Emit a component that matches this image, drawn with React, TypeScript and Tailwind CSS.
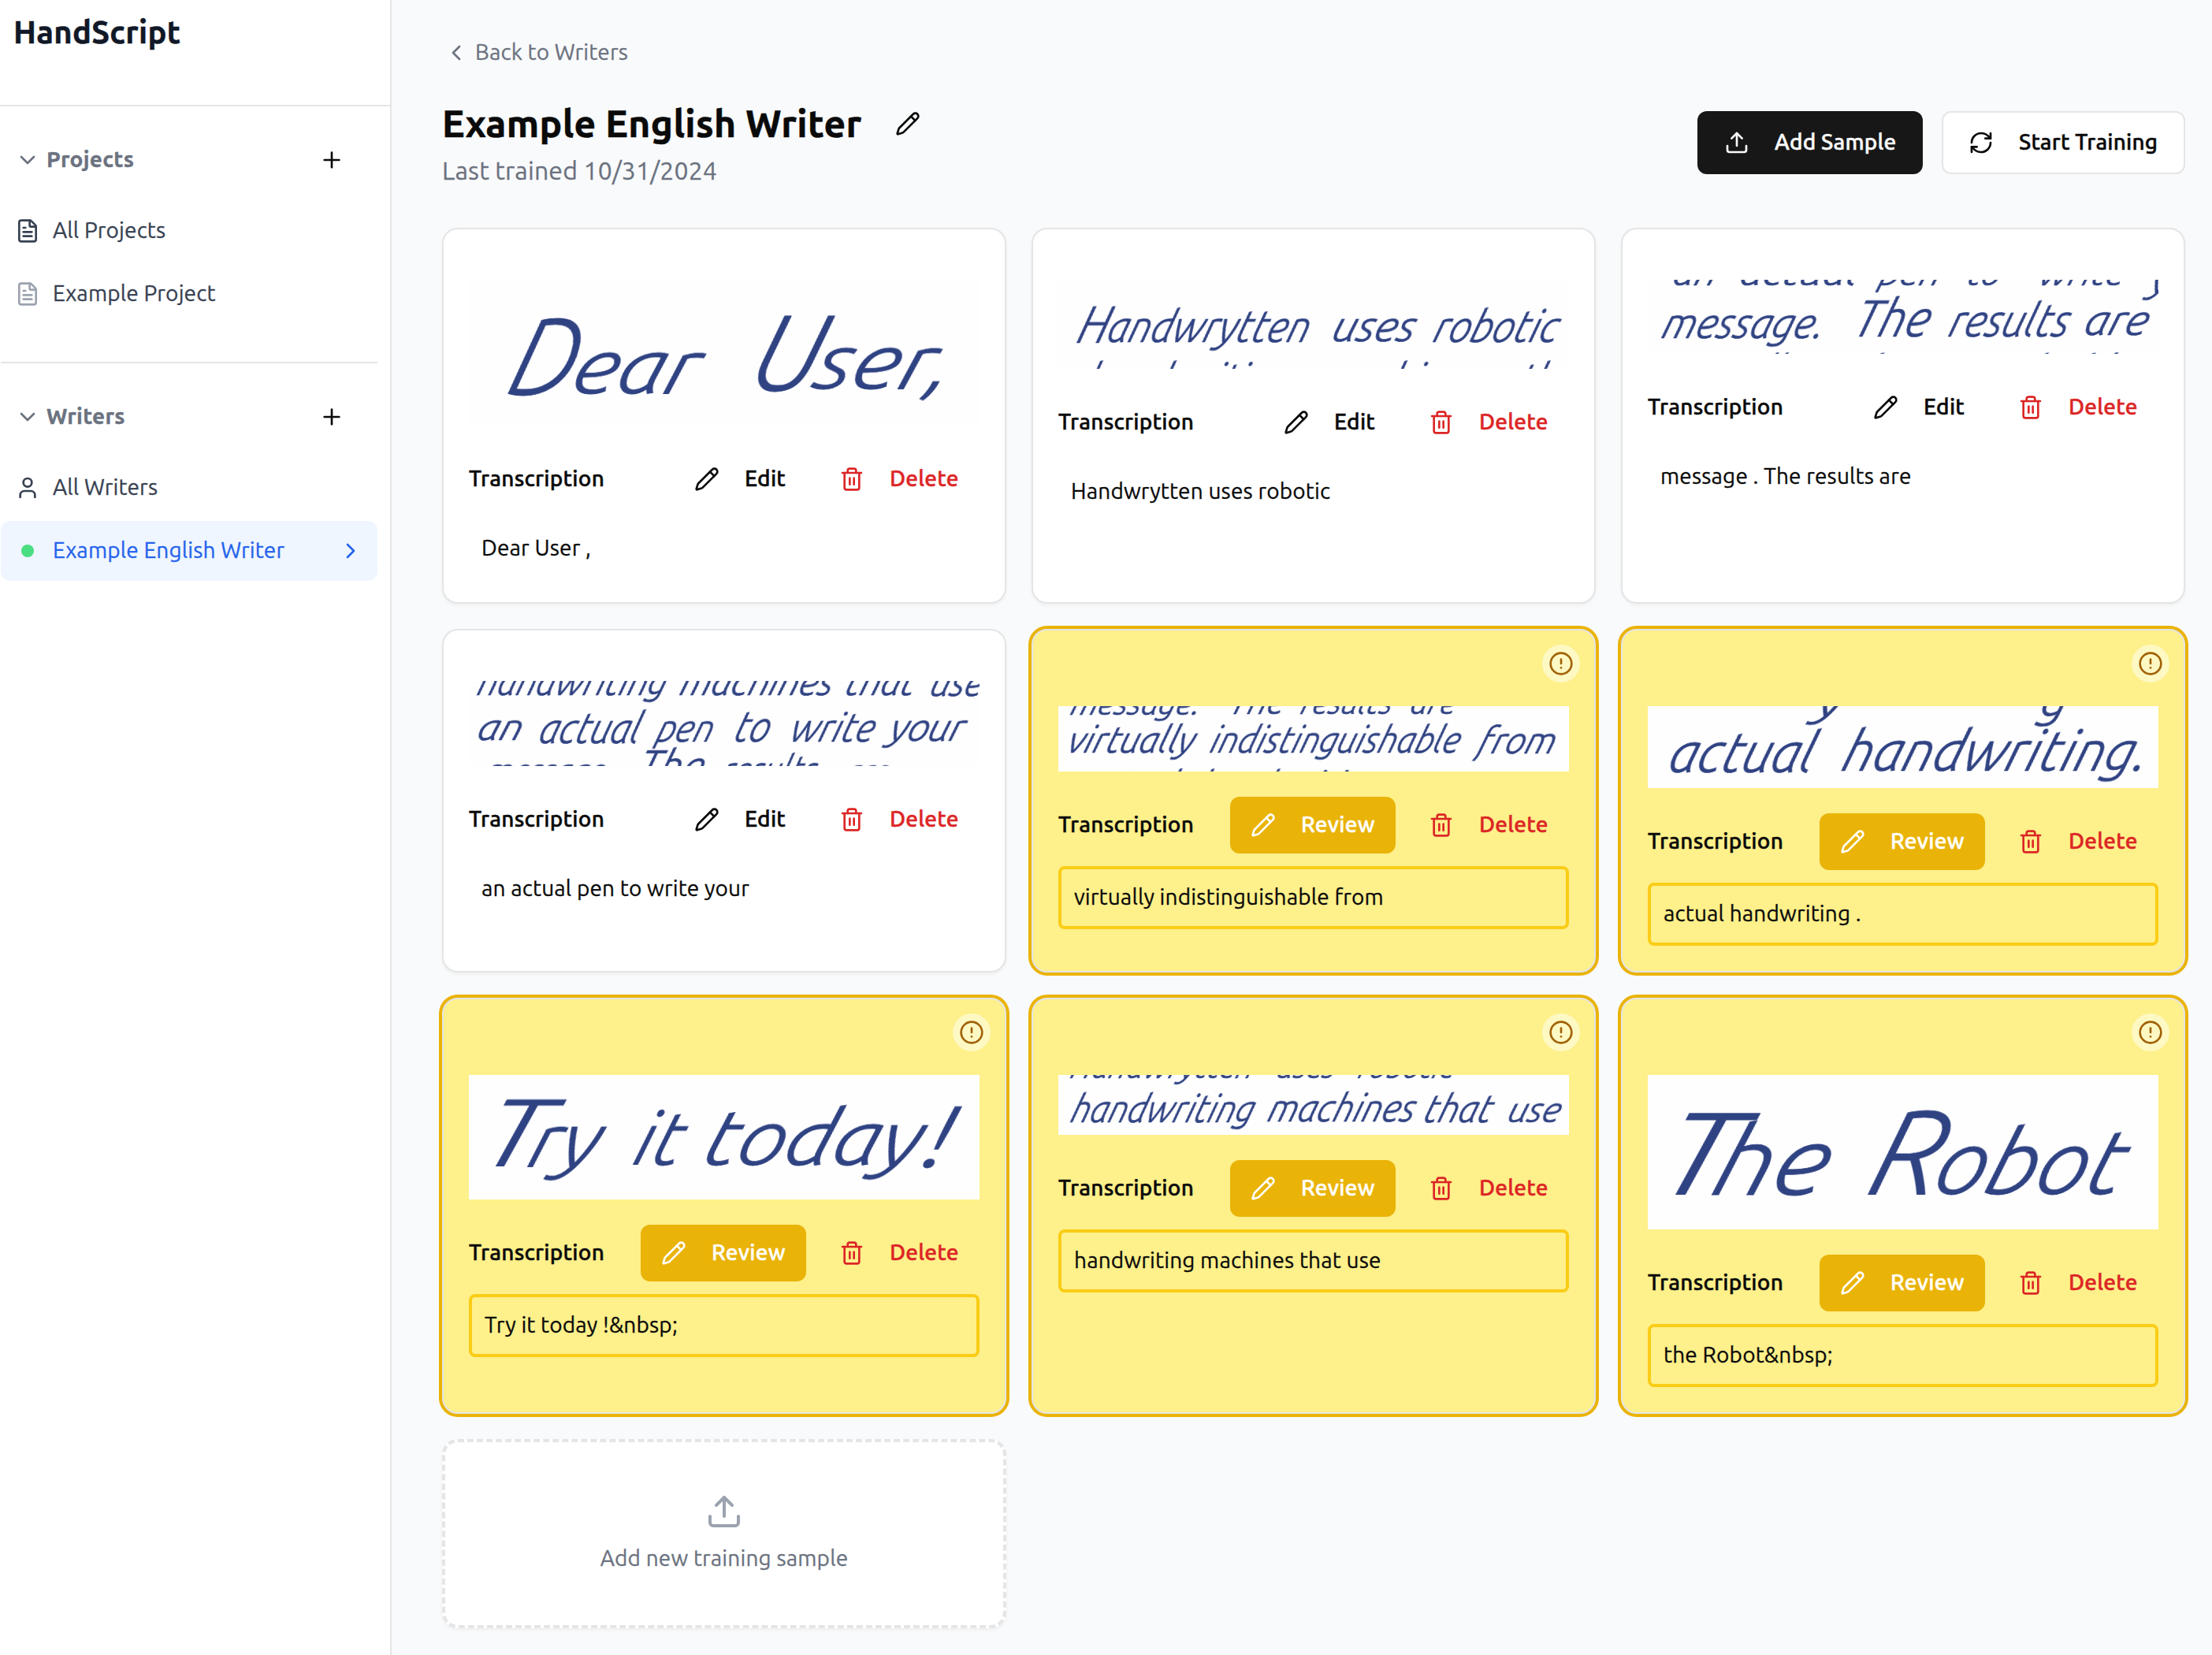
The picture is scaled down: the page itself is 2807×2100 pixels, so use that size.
import React from "react";
import {
  ChevronDown,
  ChevronLeft,
  ChevronRight,
  CircleAlert,
  FileText,
  Pencil,
  Plus,
  RefreshCw,
  Trash2,
  Upload,
  User,
} from "lucide-react";

// One piece of handwriting: text, x, baseline, width, font size.
type Ink = [string, number, number, number, number];

interface Sample {
  text: string;
  review: boolean;
  height: number;
  ink: Ink[];
}

const samples: Sample[] = [
  {
    text: "Dear User ,",
    review: false,
    height: 185,
    ink: [
      ["D", 46, 146, 84, 140],
      ["ear", 128, 144, 158, 98],
      ["U", 352, 140, 86, 136],
      ["ser,", 434, 138, 176, 98],
    ],
  },
  {
    text: "Handwrytten uses robotic",
    review: false,
    height: 113,
    ink: [
      ["H", 22, 80, 38, 66],
      ["andwrytten", 60, 79, 256, 56],
      ["uses", 346, 78, 104, 54],
      ["robotic", 474, 79, 158, 56],
      ["handwriting", 33, 145, 255, 54],
      ["machines", 330, 145, 200, 54],
      ["that", 582, 145, 90, 54],
    ],
  },
  {
    text: "message . The results are",
    review: false,
    height: 94,
    ink: [
      ["an", 30, 7, 56, 46],
      ["actual", 115, 7, 150, 46],
      ["pen", 292, 7, 78, 46],
      ["to", 404, 7, 42, 46],
      ["write", 495, 7, 108, 46],
      ["your", 636, 16, 100, 52],
      ["message.", 16, 74, 206, 54],
      ["The", 258, 72, 96, 66],
      ["results", 380, 72, 152, 58],
      ["are", 552, 70, 80, 54],
      ["virtually", 30, 131, 160, 50],
      ["indistinguishable", 215, 131, 400, 50],
    ],
  },
  {
    text: "an actual pen to write your",
    review: false,
    height: 108,
    ink: [
      ["handwriting", 9, 18, 240, 50],
      ["machines", 266, 18, 194, 48],
      ["that", 476, 18, 88, 48],
      ["use", 584, 19, 66, 48],
      ["an", 9, 75, 57, 48],
      ["actual", 87, 79, 128, 54],
      ["pen", 236, 77, 72, 50],
      ["to", 335, 77, 44, 54],
      ["write", 406, 77, 106, 52],
      ["your", 532, 76, 94, 50],
      ["message.", 20, 129, 160, 44],
      ["The", 210, 128, 84, 56],
      ["results", 318, 131, 120, 52],
      ["are", 474, 131, 56, 46],
    ],
  },
  {
    text: "virtually indistinguishable from",
    review: true,
    height: 83,
    ink: [
      ["message.", 14, 11, 165, 40],
      ["The", 215, 10, 70, 46],
      ["results", 306, 10, 116, 40],
      ["are", 445, 10, 58, 40],
      ["virtually", 10, 59, 160, 47],
      ["indistinguishable", 191, 59, 316, 48],
      ["from", 531, 60, 98, 48],
      ["actual", 30, 112, 120, 42],
      ["handwriting.", 178, 112, 240, 42],
    ],
  },
  {
    text: "actual handwriting .",
    review: true,
    height: 104,
    ink: [
      ["y", 212, 12, 34, 62],
      ["g", 496, 14, 34, 62],
      ["actual", 24, 84, 184, 72],
      ["handwriting.", 244, 82, 388, 72],
    ],
  },
  {
    text: "Try it today !&nbsp;",
    review: true,
    height: 158,
    ink: [
      ["T", 8, 116, 82, 122],
      ["ry", 72, 116, 88, 96],
      ["it", 206, 114, 60, 94],
      ["today", 294, 114, 274, 98],
      ["!", 574, 117, 30, 110],
    ],
  },
  {
    text: "handwriting machines that use",
    review: true,
    height: 76,
    ink: [
      ["Handwrytten", 14, 4, 232, 44],
      ["uses", 276, 4, 74, 42],
      ["robotic", 379, 4, 122, 42],
      ["handwriting", 14, 60, 232, 50],
      ["machines", 264, 59, 186, 49],
      ["that", 462, 60, 86, 50],
      ["use", 569, 60, 66, 45],
    ],
  },
  {
    text: "the Robot&nbsp;",
    review: true,
    height: 196,
    ink: [
      ["T", 4, 152, 98, 148],
      ["he", 78, 152, 144, 122],
      ["R", 276, 151, 90, 152],
      ["obot", 360, 151, 238, 114],
    ],
  },
];

function Handwriting({ ink, height }: { ink: Ink[]; height: number }) {
  return (
    <svg
      viewBox={`0 0 648 ${height}`}
      width="648"
      height={height}
      className="block overflow-hidden bg-[#fefeff]"
    >
      {ink.map(([t, x, y, w, size], i) => (
        <text
          key={i}
          transform={`translate(${x} ${y}) skewX(-14)`}
          textLength={w}
          lengthAdjust="spacingAndGlyphs"
          fontSize={size}
          strokeWidth={size > 80 ? 0.8 : 0.7}
          className="fill-[#2f4282] stroke-[#2f4282] font-['Ubuntu','Lato',sans-serif] font-light italic blur-[0.7px]"
        >
          {t}
        </text>
      ))}
    </svg>
  );
}

function Label({ children }: { children: React.ReactNode }) {
  return <span className="pb-[2px]">{children}</span>;
}

function SampleCard({ sample }: { sample: Sample }) {
  const { review } = sample;
  return (
    <div
      className={
        review
          ? "relative rounded-[20px] border-2 border-[#e5e5e5] bg-[#fef08a] px-8 pt-24 pb-8 shadow-[0_0_0_4px_#eab308]"
          : "relative rounded-[20px] border-2 border-[#e5e5e5] bg-white px-8 pt-16 pb-8 shadow-[0_2px_4px_rgba(0,0,0,0.05)]"
      }
    >
      {review && (
        <div className="absolute top-[18px] right-[18px] rounded-full bg-[#fef9c3] p-2 text-[#a16207]">
          <CircleAlert size={32} />
        </div>
      )}
      <Handwriting ink={sample.ink} height={sample.height} />
      <div className="mt-8 flex h-[72px] items-center justify-between font-medium tracking-[0.25px] [-webkit-text-stroke:0.5px]">
        <Label>Transcription</Label>
        <div className="flex gap-4">
          {review ? (
            <button className="flex h-[72px] w-[210px] items-center gap-8 rounded-[12px] bg-[#eab308] px-[26px] text-white">
              <Pencil size={32} className="shrink-0" />
              <Label>Review</Label>
            </button>
          ) : (
            <button className="flex h-[72px] w-[168px] items-center gap-8 px-[26px]">
              <Pencil size={32} className="shrink-0" />
              <Label>Edit</Label>
            </button>
          )}
          <button className="flex h-[72px] w-[204px] items-center gap-8 px-[26px] text-[#dc2626]">
            <Trash2 size={32} className="shrink-0" />
            <Label>Delete</Label>
          </button>
        </div>
      </div>
      <div
        className={
          review
            ? "mt-4 rounded-[8px] border-4 border-[#facc15] px-4 pt-[15px] pb-[17px]"
            : "mt-4 rounded-[8px] px-4 pt-[15px] pb-[17px]"
        }
      >
        {sample.text}
      </div>
    </div>
  );
}

function SectionHeader({ label }: { label: string }) {
  return (
    <div className="flex h-[72px] items-center justify-between pr-[42px] pl-[18px]">
      <div className="flex items-center gap-2 font-bold tracking-[0.3px] text-[#6b7280] [-webkit-text-stroke:0.4px]">
        <ChevronDown size={32} />
        <Label>{label}</Label>
      </div>
      <Plus size={32} />
    </div>
  );
}

function NavItem({ icon, label }: { icon: React.ReactNode; label: string }) {
  return (
    <div className="flex h-[76px] items-center gap-4 px-[18px] text-[#374151]">
      {icon}
      <Label>{label}</Label>
    </div>
  );
}

function Sidebar() {
  return (
    <aside className="w-[497px] shrink-0 border-r-2 border-[#e5e5e5] bg-white">
      <div className="h-[135px] border-b-2 border-[#e5e5e5] pt-[13px] pl-[17px] text-[40px] leading-[56px] font-bold tracking-[0.3px] text-[#111827] [-webkit-text-stroke:0.5px]">
        HandScript
      </div>
      <div className="mr-4 ml-px pt-8">
        <SectionHeader label="Projects" />
        <div className="mt-4 flex flex-col gap-1">
          <NavItem icon={<FileText size={32} />} label="All Projects" />
          <NavItem
            icon={<FileText size={32} className="text-[#9ca3af]" />}
            label="Example Project"
          />
        </div>
        <div className="mt-12 h-[2px] bg-[#e5e5e5]" />
        <div className="pt-8">
          <SectionHeader label="Writers" />
        </div>
        <div className="mt-4 flex flex-col gap-1">
          <NavItem icon={<User size={32} />} label="All Writers" />
          <div className="flex h-[76px] items-center rounded-[12px] bg-[#eff6ff] px-[18px] text-[#2563eb]">
            <div className="mx-2 size-4 rounded-full bg-[#4ade80]" />
            <span className="ml-4 grow pb-[2px]">Example English Writer</span>
            <ChevronRight size={32} />
          </div>
        </div>
      </div>
    </aside>
  );
}

export default function App() {
  return (
    <div className="flex h-[2100px] w-[2807px] overflow-hidden bg-[#f9fafb] font-['Ubuntu','Noto_Sans',sans-serif] text-[28px] leading-[40px] tracking-[0.16px] text-[#0a0a0a] [-webkit-text-stroke:0.3px]">
      <Sidebar />
      <main className="grow pt-[31px] pr-[34px] pl-16">
        <div className="ml-[2px] flex h-[72px] items-center gap-2 text-[#6b7280]">
          <ChevronLeft size={32} />
          <Label>Back to Writers</Label>
        </div>
        <div className="mt-[17px] flex items-start justify-between">
          <div>
            <div className="flex h-[72px] items-center gap-4">
              <h1 className="text-[48px] leading-[64px] font-bold tracking-[0.38px] [-webkit-text-stroke:0.6px]">
                Example English Writer
              </h1>
              <div className="px-[26px] pt-[2px]">
                <Pencil size={32} />
              </div>
            </div>
            <p className="text-[32px] leading-[48px] text-[#6b7280]">
              Last trained 10/31/2024
            </p>
          </div>
          <div className="mt-[21px] flex gap-6 font-medium tracking-[0.18px] [-webkit-text-stroke:0.5px]">
            <button className="flex h-20 w-[286px] items-center gap-8 rounded-[12px] bg-[#171717] pl-[34px] text-[#fafafa]">
              <Upload size={32} />
              <Label>Add Sample</Label>
            </button>
            <button className="flex h-20 w-[309px] items-center gap-8 rounded-[12px] border-2 border-[#e5e5e5] bg-white pl-8">
              <RefreshCw size={32} />
              <Label>Start Training</Label>
            </button>
          </div>
        </div>
        <div className="mt-[49px] grid grid-cols-3 gap-8">
          {samples.map((s) => (
            <SampleCard key={s.text} sample={s} />
          ))}
          <div className="flex h-[240px] flex-col items-center justify-center gap-4 rounded-[20px] border-4 border-dashed border-[#e5e5e5] bg-white text-[#6b7280] shadow-[0_2px_4px_rgba(0,0,0,0.05)]">
            <Upload size={48} className="text-[#9ca3af]" />
            <span className="-mt-px mb-px">Add new training sample</span>
          </div>
        </div>
      </main>
    </div>
  );
}
